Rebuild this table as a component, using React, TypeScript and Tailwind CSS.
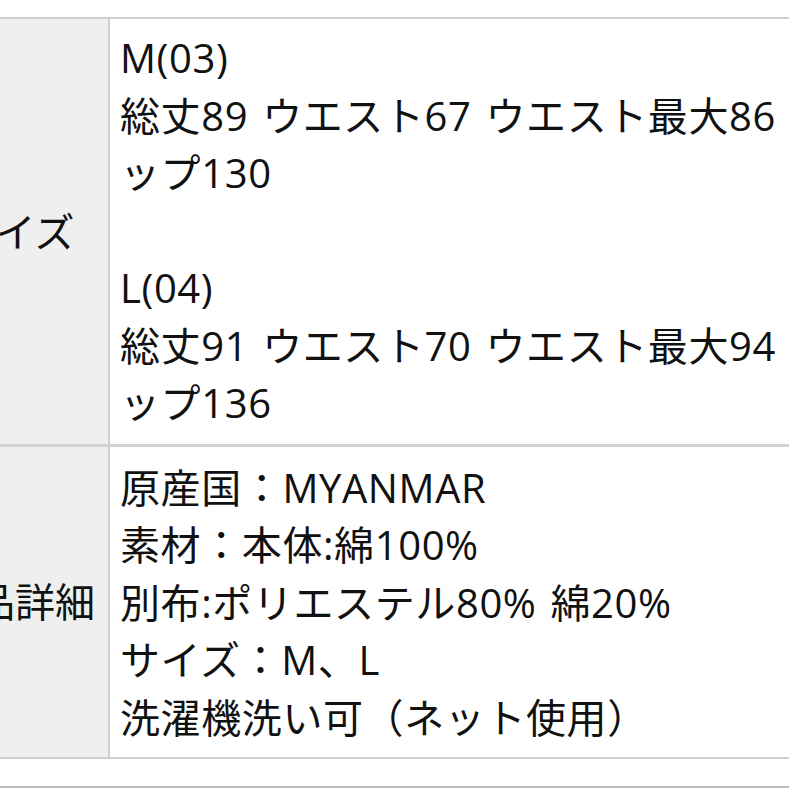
const sizeLines = [
  'M(03)',
  '総丈89 ウエスト67 ウエスト最大86',
  'ップ130',
  '',
  'L(04)',
  '総丈91 ウエスト70 ウエスト最大94',
  'ップ136',
];

const detailLines = [
  '原産国：MYANMAR',
  '素材：本体:綿100%',
  '別布:ポリエステル80% 綿20%',
  'サイズ：M、L',
  '洗濯機洗い可（ネット使用）',
];

function Row({ label, lines, className }: { label: string; lines: string[]; className: string }) {
  return (
    <div className="grid grid-cols-[194px_1fr]">
      <div className="flex items-center justify-center pl-[6px] bg-[#efefef] border-r-2 border-[#cfcfcf] whitespace-nowrap">
        {label}
      </div>
      <div className={`overflow-hidden pl-[10px] tracking-[0.6px] [word-spacing:3px] ${className}`}>
        {lines.map((line, i) => (
          <div key={i} className="whitespace-nowrap h-[57.5px]">
            {line || '\u00a0'}
          </div>
        ))}
      </div>
    </div>
  );
}

export default function App() {
  return (
    <div
      className="w-[789px] h-[789px] overflow-hidden bg-white text-[#111] text-[40px] leading-[57.5px]"
      style={{ fontFamily: '"Open Sans", "Noto Sans CJK JP", sans-serif' }}
    >
      <div className="h-[17px]" />
      <div className="ml-[-84px] w-[900px] border-t-2 border-b-2 border-[#cfcfcf]">
        <Row label="サイズ" lines={sizeLines} className="pt-[10px] pb-[12px]" />
        <div className="h-[3px] bg-[#d2d2d2]" />
        <Row label="商品詳細" lines={detailLines} className="pt-[12px] pb-[11px]" />
      </div>
      <div className="h-[27px]" />
      <div className="h-[2px] bg-[#bdbdbd]" />
    </div>
  );
}
